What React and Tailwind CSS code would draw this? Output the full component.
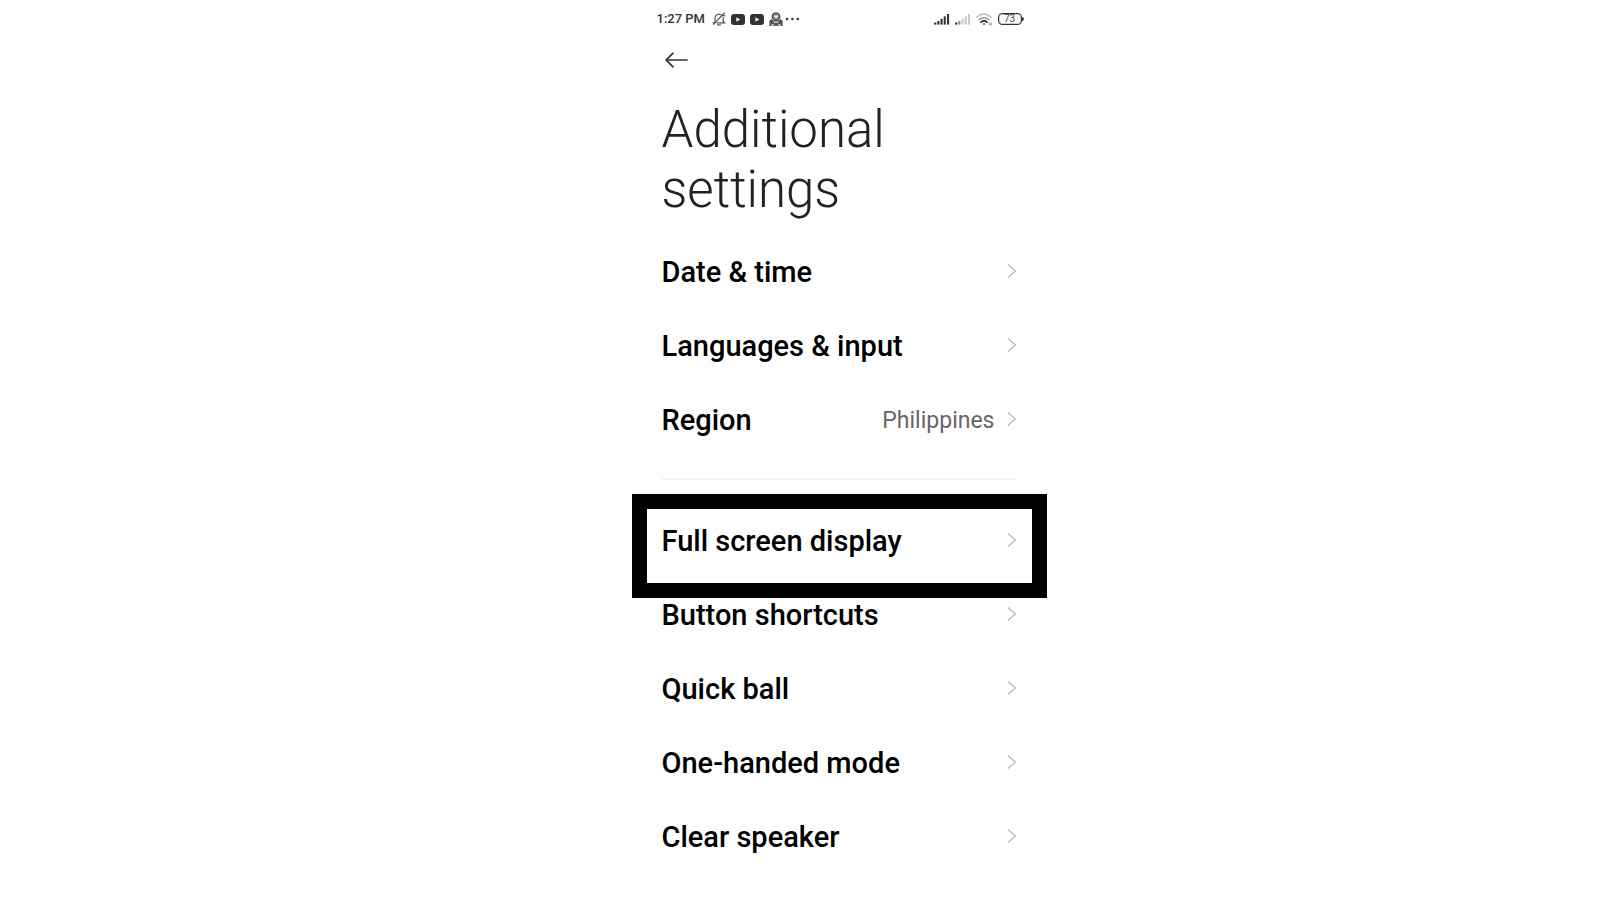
import React from 'react';

const topItems = [
    { label: 'Date & time' },
    { label: 'Languages & input' },
    { label: 'Region', value: 'Philippines' },
];

const bottomItems = [
    { label: 'Full screen display', highlighted: true },
    { label: 'Button shortcuts' },
    { label: 'Quick ball' },
    { label: 'One-handed mode' },
    { label: 'Clear speaker' },
];

const MutedBell = () => (
    <svg width="14" height="14" viewBox="0 0 14 14" fill="none" stroke="#555" strokeWidth="1.2" strokeLinecap="round">
        <path d="M3 9.6V6.4A4 4 0 0 1 9 2.8" />
        <path d="M11.2 5.6v3.6l1.4 1.6H5" />
        <path d="M1 10.8h1.6M5.4 12.9h3M12.4 1 1.4 12.4M10.4 3.4l2.4.4M4.8 8.8l4.4-4.6" />
    </svg>
);

const VideoIcon = () => (
    <svg width="14" height="11" viewBox="0 0 14 11">
        <rect width="14" height="11" rx="3" fill="#333" />
        <path d="M5.4 3.2v4.6L9.2 5.5z" fill="#fff" />
    </svg>
);

const GameIcon = () => (
    <svg width="14" height="14" viewBox="0 0 14 14">
        <circle cx="7" cy="4.6" r="3.7" fill="#999" stroke="#444" strokeWidth="1.3" />
        <path d="M5 4.4 7.2 3.2l2 1.6-2 1.2z" fill="#eee" />
        <path d="M.4 14V8.8L2.6 7l1.6 1.6h5.6L11.4 7l2.2 1.8V14z" fill="#555" />
        <path d="M4.6 9.4h4.8v1.6H4.6zM2.6 12h2v2h-2zM9.4 12h2v2h-2z" fill="#ccc" />
    </svg>
);

const Signal = ({ weak }) => (
    <svg width="16" height="12" viewBox="0 0 16 12" fill={weak ? '#ccc' : '#333'}>
        <rect x="0" y="9.6" width="2.4" height="2" fill="#333" />
        <rect x="3.3" y="8" width="2.1" height="3.6" fill={weak ? '#888' : '#333'} />
        <rect x="6.5" y="5.8" width="2.1" height="5.8" />
        <rect x="9.7" y="3.4" width="2.1" height="8.2" />
        <rect x="13" y="1" width="2.1" height="10.6" />
    </svg>
);

const Wifi = () => (
    <svg width="17" height="13" viewBox="0 0 17 13" fill="none" strokeLinecap="round">
        <path d="M.8 4.2Q8 -2 15.2 4.2" stroke="#bbb" strokeWidth="1.4" />
        <path d="M3 6.8Q8 2.6 13 6.8" stroke="#999" strokeWidth="1.4" />
        <path d="M5 9.2Q8 6.4 11 9.2" stroke="#333" strokeWidth="1.8" />
        <path d="M6.6 10.6h2.8L8 12.2z" fill="#333" />
        <circle cx="14.4" cy="11" r="1.3" stroke="#999" strokeWidth="1" />
    </svg>
);

const Battery = () => (
    <div className="flex items-center">
        <div className="flex h-3 w-6 items-center justify-center rounded-[4px] border border-[#333] text-[10px] leading-none text-[#444] ring-1 ring-[#ccc] ring-inset">
            73
        </div>
        <div className="h-1 w-0.5 rounded-r-sm bg-[#444]" />
    </div>
);

const Chevron = () => (
    <svg width="10" height="16" viewBox="0 0 10 16" fill="none" stroke="#b8b8b8" strokeWidth="1.3" className="mb-1">
        <path d="M1 1.4 8.4 8 1 14.6" />
    </svg>
);

const SettingRow = ({ item }) => (
    <li className="relative">
        <button type="button" className="flex h-[74px] w-full items-center text-left">
            <span className="flex-1 text-[29px] font-medium text-black">{item.label}</span>
            {item.value && <span className="mr-3 text-[23px] text-[#666]">{item.value}</span>}
            <Chevron />
        </button>
        {item.highlighted && (
            <div className="pointer-events-none absolute -inset-x-[30px] -top-[11px] h-[104px] border-[15px] border-black" />
        )}
    </li>
);

const App = () => {
    return (
        <div className="min-h-screen bg-white pl-[78px] font-[Roboto,sans-serif]">
            <main className="mx-auto w-full max-w-[415px]">
                <div className="flex h-9 items-center justify-between pt-0.5 pr-[23px] pl-[25px] text-[#333]">
                    <div className="flex items-center gap-[5px]">
                        <span className="mr-0.5 text-[13px] font-medium">1:27 PM</span>
                        <MutedBell />
                        <VideoIcon />
                        <VideoIcon />
                        <div className="flex items-center gap-0.5">
                            <GameIcon />
                            <svg width="16" height="4" viewBox="0 0 16 4" fill="#333">
                                <circle cx="2" cy="2" r="1.3" />
                                <circle cx="7.4" cy="2" r="1.3" />
                                <circle cx="12.8" cy="2" r="1.3" />
                            </svg>
                        </div>
                    </div>
                    <div className="flex items-center gap-[5px]">
                        <Signal />
                        <Signal weak />
                        <Wifi />
                        <Battery />
                    </div>
                </div>

                <div className="px-[30px]">
                    <button type="button" aria-label="Back" className="flex h-12 w-12 items-center pl-[3px]">
                        <svg width="24" height="16" viewBox="0 0 24 16" fill="none" stroke="#333" strokeWidth="1.7" strokeLinecap="round">
                            <path d="M22 8H1.2M8 1.2 1.2 8 8 14.8" />
                        </svg>
                    </button>

                    <h1 className="mt-4 text-[51px] leading-[60px] font-light text-[#222]">
                        Additional<br />settings
                    </h1>

                    <ul className="mt-4 border-b-2 border-[#f4f4f4] pb-5">
                        {topItems.map((item) => (
                            <SettingRow key={item.label} item={item} />
                        ))}
                    </ul>

                    <ul className="mt-[25px]">
                        {bottomItems.map((item) => (
                            <SettingRow key={item.label} item={item} />
                        ))}
                    </ul>
                </div>
            </main>
        </div>
    );
};

export default App;
